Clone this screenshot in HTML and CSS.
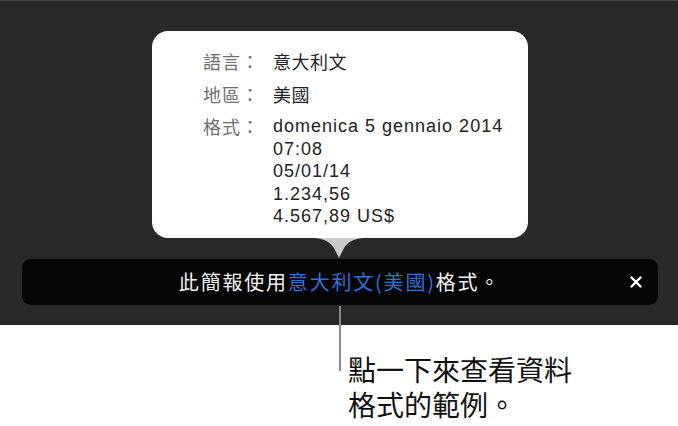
FILE: index.html
```html
<!DOCTYPE html>
<html lang="zh-Hant">
<head>
<meta charset="utf-8">
<link rel="stylesheet" href="styles.css">
</head>
<body>
<div class="page">
  <section class="stage">
    <div class="popover">
      <div class="row">
        <div class="label">語言：</div>
        <div class="value">意大利文</div>
      </div>
      <div class="row">
        <div class="label">地區：</div>
        <div class="value">美國</div>
      </div>
      <div class="row">
        <div class="label">格式：</div>
        <div class="value">
          <div>domenica 5 gennaio 2014</div>
          <div>07:08</div>
          <div>05/01/14</div>
          <div>1.234,56</div>
          <div>4.567,89 US$</div>
        </div>
      </div>
      <svg class="arrow" width="52" height="20" viewBox="0 0 52 20" aria-hidden="true">
        <path d="M0 0 C12 0 18 5 21.5 11 L26 20 L30.5 11 C34 5 40 0 52 0 Z" fill="#cbcbcb"/>
      </svg>
    </div>
    <div class="bar">
      <div class="bar-text">此簡報使用<span class="link">意大利文(美國)</span>格式。</div>
      <svg class="close" width="12" height="12" viewBox="0 0 12 12" aria-hidden="true">
        <path d="M1.5 1.5 L10.5 10.5 M10.5 1.5 L1.5 10.5" stroke="#ffffff" stroke-width="2.4" stroke-linecap="round"/>
      </svg>
    </div>
  </section>
  <div class="leader"></div>
  <div class="callout">
    <div class="callout-line">點一下來查看資料</div>
    <div class="callout-line">格式的範例。</div>
  </div>
</div>
</body>
</html>
```
FILE: styles.css
```css
html, body {
  margin: 0;
  padding: 0;
  background: #ffffff;
}
.page {
  position: relative;
  width: 678px;
  height: 426px;
  overflow: hidden;
}
.stage {
  background: #282828;
  border-top: 1px solid #464646;
  padding: 30px 0 19px 0;
  box-sizing: border-box;
  height: 325px;
}
.popover {
  position: relative;
  margin-left: 152px;
  width: 376px;
  height: 207px;
  box-sizing: border-box;
  background: #ffffff;
  border-radius: 16px;
  padding: 19px 0 0 51px;
  display: flex;
  flex-direction: column;
  gap: 10px;
  font-family: "Liberation Sans", "Noto Sans CJK TC", sans-serif;
  font-size: 18px;
  line-height: 22.5px;
  letter-spacing: 1px;
}
.row {
  display: grid;
  grid-template-columns: 70px 1fr;
}
.label {
  color: #6e6e6e;
  font-family: "Noto Sans CJK TC", sans-serif;
  letter-spacing: 1px;
}
.value {
  color: #222222;
}
.row:first-child .value,
.row:nth-child(2) .value {
  font-family: "Noto Sans CJK TC", sans-serif;
  letter-spacing: 0.5px;
}
.arrow {
  position: absolute;
  left: 161px;
  top: 207px;
}
.bar {
  margin: 21px 20px 0 22px;
  height: 46px;
  background: #050505;
  border-radius: 9px;
  display: grid;
  grid-template-columns: 1fr auto 1fr;
  align-items: center;
}
.bar-text {
  grid-column: 2;
  color: #f2f2f2;
  font-family: "Noto Sans CJK TC", sans-serif;
  font-size: 20px;
  letter-spacing: 1.8px;
  line-height: 46px;
  white-space: nowrap;
}
.link {
  color: #2c72dc;
}
.close {
  grid-column: 3;
  justify-self: end;
  margin-right: 16px;
}
.leader {
  position: absolute;
  left: 339px;
  top: 306px;
  width: 2px;
  height: 65px;
  background: #8a8a8a;
}
.callout {
  margin: 27px 0 0 348px;
  font-family: "Noto Sans CJK TC", sans-serif;
  font-size: 28px;
  line-height: 35px;
  color: #111111;
}
.callout-line {
  height: 35px;
  white-space: nowrap;
}
```
